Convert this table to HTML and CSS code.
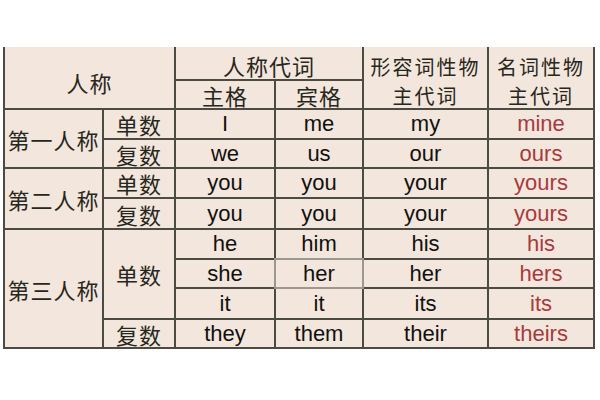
FILE: index.html
```html
<!DOCTYPE html>
<html lang="zh">
<head>
<meta charset="utf-8">
<title>人称代词</title>
<link rel="stylesheet" href="styles.css">
</head>
<body>
<div class="table">
  <div class="cell zh h-person">人称</div>
  <div class="cell zh h-pron">人称代词</div>
  <div class="cell zh h-adj stack"><span class="line">形容词性物</span><span class="line">主代词</span></div>
  <div class="cell zh h-noun stack"><span class="line">名词性物</span><span class="line">主代词</span></div>
  <div class="cell zh h-sub">主格</div>
  <div class="cell zh h-obj">宾格</div>

  <div class="cell zh p1">第一人称</div>
  <div class="cell zh">单数</div>
  <div class="cell">I</div>
  <div class="cell">me</div>
  <div class="cell">my</div>
  <div class="cell red">mine</div>
  <div class="cell zh">复数</div>
  <div class="cell">we</div>
  <div class="cell">us</div>
  <div class="cell">our</div>
  <div class="cell red">ours</div>

  <div class="cell zh p2">第二人称</div>
  <div class="cell zh">单数</div>
  <div class="cell">you</div>
  <div class="cell">you</div>
  <div class="cell">your</div>
  <div class="cell red">yours</div>
  <div class="cell zh">复数</div>
  <div class="cell">you</div>
  <div class="cell">you</div>
  <div class="cell">your</div>
  <div class="cell red">yours</div>

  <div class="cell zh p3">第三人称</div>
  <div class="cell zh sg3">单数</div>
  <div class="cell">he</div>
  <div class="cell">him</div>
  <div class="cell">his</div>
  <div class="cell red">his</div>
  <div class="cell">she</div>
  <div class="cell selected">her</div>
  <div class="cell">her</div>
  <div class="cell red">hers</div>
  <div class="cell">it</div>
  <div class="cell">it</div>
  <div class="cell">its</div>
  <div class="cell red">its</div>
  <div class="cell zh">复数</div>
  <div class="cell">they</div>
  <div class="cell">them</div>
  <div class="cell">their</div>
  <div class="cell red">theirs</div>
</div>
</body>
</html>
```

FILE: styles.css
```css
html, body {
  margin: 0;
  padding: 0;
  background: #ffffff;
}

body {
  width: 600px;
  height: 400px;
  overflow: hidden;
}

.table {
  margin: 47px 0 0 3px;
  width: 592px;
  box-sizing: border-box;
  padding: 0 2px 2px 2px;
  background: #4b4b43;
  display: grid;
  grid-template-columns: 97px 70px 98px 86px 123px 104px;
  grid-template-rows: 32px 27px 28px 27px 28px 29px 28px 27px 29px 27px;
  gap: 2px;
}

.cell {
  background: #f3e6dc;
  display: flex;
  align-items: center;
  justify-content: center;
  text-align: center;
  font-family: "Liberation Sans", Arial, sans-serif;
  font-size: 22px;
  color: #111111;
  line-height: 1;
}

.zh {
  font-family: "Noto Sans CJK SC", "Noto Sans", sans-serif;
  font-size: 22px;
  letter-spacing: 1px;
  color: #262720;
}

.red {
  color: #a63b3e;
}

.stack {
  flex-direction: column;
  justify-content: flex-start;
  padding-top: 5px;
  font-size: 20px;
  letter-spacing: 2px;
}

.line {
  display: block;
  line-height: 29px;
}

.h-person {
  grid-column: 1 / 3;
  grid-row: 1 / 3;
  padding-top: 8px;
}

.h-pron {
  grid-column: 3 / 5;
  grid-row: 1;
  padding-top: 4px;
}

.h-adj {
  grid-column: 5;
  grid-row: 1 / 3;
}

.h-noun {
  grid-column: 6;
  grid-row: 1 / 3;
}

.h-sub {
  grid-column: 3;
  grid-row: 2;
}

.h-obj {
  grid-column: 4;
  grid-row: 2;
}

.p1 {
  grid-column: 1;
  grid-row: 3 / 5;
}

.p2 {
  grid-column: 1;
  grid-row: 5 / 7;
}

.p3 {
  grid-column: 1;
  grid-row: 7 / 11;
}

.sg3 {
  grid-row: 7 / 10;
}

.selected {
  outline: 2px solid #9c9891;
}
```
